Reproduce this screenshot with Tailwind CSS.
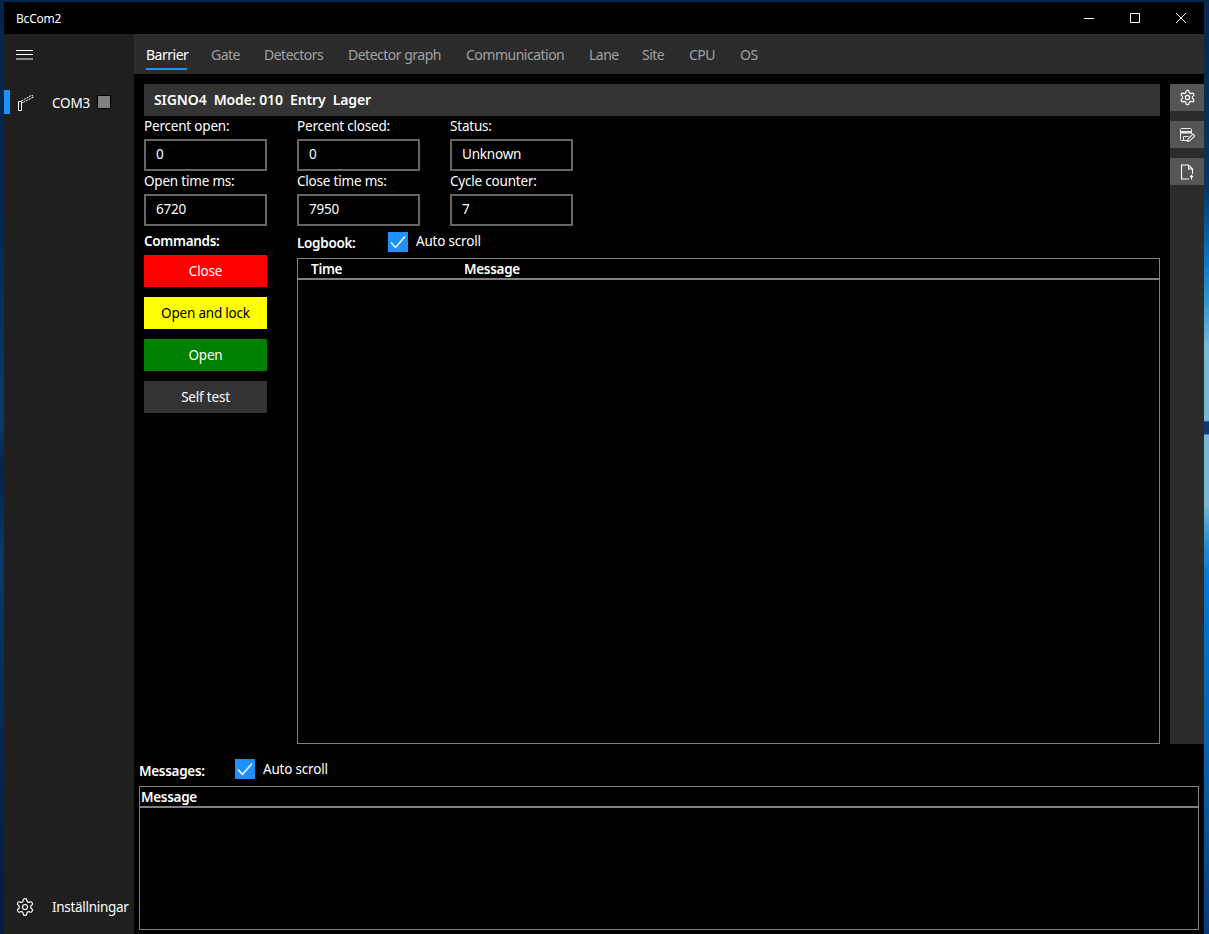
<!DOCTYPE html>
<html lang="en">
<head>
    <meta charset="UTF-8">
    <title>BcCom2</title>
    <script src="https://cdn.jsdelivr.net/npm/@tailwindcss/browser@4"></script>
</head>
<body class="w-[1209px] h-[934px] overflow-hidden bg-[#03264f] font-['Noto_Sans','Open_Sans',sans-serif] text-[13.5px] tracking-[-0.2px] leading-[19px] text-white">
<div class="flex h-[934px]">
    <!-- wallpaper, left edge -->
    <div class="w-[4px] h-full bg-[linear-gradient(180deg,#04254a_0%,#032a55_25%,#0a3a6c_45%,#04244a_50%,#073a6c_60%,#03244c_85%,#021c40_100%)]"></div>

    <!-- app window -->
    <div class="w-[1200px] mt-[2px] flex flex-col bg-black">
        <!-- title bar -->
        <div class="h-[32px] shrink-0 flex items-center justify-between pl-[12px]">
            <span class="text-[12px]">BcCom2</span>
            <div class="flex">
                <div class="w-[46px] h-[32px] flex items-center justify-center">
                    <svg width="10" height="10" viewBox="0 0 10 10" fill="none" stroke="#fff"><path d="M0 5.5h10"/></svg>
                </div>
                <div class="w-[46px] h-[32px] flex items-center justify-center">
                    <svg width="10" height="10" viewBox="0 0 10 10" fill="none" stroke="#fff"><path d="M.5.5h9v9h-9z"/></svg>
                </div>
                <div class="w-[46px] h-[32px] flex items-center justify-center">
                    <svg width="10" height="10" viewBox="0 0 10 10" fill="none" stroke="#fff"><path d="M0 0l10 10M10 0L0 10"/></svg>
                </div>
            </div>
        </div>

        <div class="flex flex-1 min-h-0">
            <!-- nav pane -->
            <nav class="w-[130px] shrink-0 bg-[#1f1f1f] flex flex-col">
                <div class="h-[40px] pl-[12px] flex items-center">
                    <svg width="17" height="11" viewBox="0 0 17 11" stroke="#fff"><path d="M0 1.5h17M0 5.5h17M0 10h17"/></svg>
                </div>
                <div class="mt-[16px] h-[24px] flex items-center">
                    <div class="w-[6px] h-[24px] bg-[#1e90ff]"></div>
                    <svg class="ml-[7px] shrink-0" width="17" height="17" viewBox="0 0 17 17" fill="none" stroke="#fff">
                        <path d="M1.5 7.500h3v9h-3z"/>
                        <path d="M4.500 7L15 1l1.500 2L5 9z" stroke-width="1" stroke-dasharray="2 1"/>
                    </svg>
                    <span class="ml-[18px] w-[41px] shrink-0 pt-[2px]">COM3</span>
                    <div class="ml-[4px] w-[14px] h-[14px] bg-[#808080] border border-black"></div>
                </div>
                <div class="mt-auto mb-[15px] h-[24px] flex items-center pl-[11px]">
                    <svg class="shrink-0" width="20" height="20" viewBox="0 0 24 24" fill="none" stroke="#fff" stroke-width="1.4">
                        <path d="M12.22 2h-.44a2 2 0 0 0-2 2v.18a2 2 0 0 1-1 1.73l-.43.25a2 2 0 0 1-2 0l-.15-.08a2 2 0 0 0-2.73.73l-.22.38a2 2 0 0 0 .73 2.73l.15.1a2 2 0 0 1 1 1.72v.51a2 2 0 0 1-1 1.74l-.15.09a2 2 0 0 0-.73 2.73l.22.38a2 2 0 0 0 2.73.73l.15-.08a2 2 0 0 1 2 0l.43.25a2 2 0 0 1 1 1.73V20a2 2 0 0 0 2 2h.44a2 2 0 0 0 2-2v-.18a2 2 0 0 1 1-1.73l.43-.25a2 2 0 0 1 2 0l.15.08a2 2 0 0 0 2.73-.73l.22-.39a2 2 0 0 0-.73-2.73l-.15-.08a2 2 0 0 1-1-1.74v-.5a2 2 0 0 1 1-1.74l.15-.09a2 2 0 0 0 .73-2.73l-.22-.38a2 2 0 0 0-2.73-.73l-.15.08a2 2 0 0 1-2 0l-.43-.25a2 2 0 0 1-1-1.73V4a2 2 0 0 0-2-2z"/>
                        <circle cx="12" cy="12" r="3"/>
                    </svg>
                    <span class="ml-[17px] whitespace-nowrap tracking-[-0.3px]">Inställningar</span>
                </div>
            </nav>

            <div class="flex-1 flex flex-col min-w-0">
                <!-- tabs -->
                <div class="h-[40px] shrink-0 bg-[#2b2b2b] flex pl-[12px] gap-[24px] text-[#a0a0a0] text-[14px] tracking-[-0.5px]">
                    <div class="w-[41px] h-[36px] pt-[6px] flex items-center whitespace-nowrap text-white border-b-2 border-[#1e90ff]">Barrier</div>
                    <div class="w-[29px] h-[40px] flex items-center whitespace-nowrap">Gate</div>
                    <div class="w-[60px] h-[40px] flex items-center whitespace-nowrap">Detectors</div>
                    <div class="w-[94px] h-[40px] flex items-center whitespace-nowrap">Detector graph</div>
                    <div class="w-[99px] h-[40px] flex items-center whitespace-nowrap">Communication</div>
                    <div class="w-[29px] h-[40px] flex items-center whitespace-nowrap">Lane</div>
                    <div class="w-[23px] h-[40px] flex items-center whitespace-nowrap">Site</div>
                    <div class="w-[27px] h-[40px] flex items-center whitespace-nowrap">CPU</div>
                    <div class="w-[18px] h-[40px] flex items-center whitespace-nowrap">OS</div>
                </div>

                <!-- barrier page -->
                <div class="mt-[10px] h-[660px] shrink-0 flex">
                    <div class="ml-[10px] w-[1016px] flex flex-col">
                        <div class="h-[32px] shrink-0 bg-[#333333] pl-[10px] pb-[2px] flex items-center text-[14px] tracking-[-0.1px] font-semibold whitespace-pre">SIGNO4  Mode: 010  Entry  Lager</div>

                        <div class="flex flex-1 min-h-0">
                            <!-- left column -->
                            <div class="w-[123px] shrink-0">
                                <div class="h-[23px] pt-[1px]">Percent open:</div>
                                <div class="h-[32px] border-2 border-[#666666] pl-[10px] pb-[2px] flex items-center">0</div>
                                <div class="h-[23px] pt-[1px]">Open time ms:</div>
                                <div class="h-[32px] border-2 border-[#666666] pl-[10px] pb-[2px] flex items-center">6720</div>
                                <div class="h-[29px] pt-[6px] font-semibold tracking-[-0.3px]">Commands:</div>
                                <div class="flex flex-col gap-[10px] text-center">
                                    <div class="h-[32px] leading-[32px] bg-[#ff0000]">Close</div>
                                    <div class="h-[32px] leading-[32px] bg-[#ffff00] text-black">Open and lock</div>
                                    <div class="h-[32px] leading-[32px] bg-[#008000]">Open</div>
                                    <div class="h-[32px] leading-[32px] bg-[#333333]">Self test</div>
                                </div>
                            </div>

                            <!-- right of commands -->
                            <div class="ml-[30px] flex-1 flex flex-col min-w-0">
                                <div class="flex gap-[30px]">
                                    <div class="w-[123px]">
                                        <div class="h-[23px] pt-[1px]">Percent closed:</div>
                                        <div class="h-[32px] border-2 border-[#666666] pl-[10px] pb-[2px] flex items-center">0</div>
                                        <div class="h-[23px] pt-[1px]">Close time ms:</div>
                                        <div class="h-[32px] border-2 border-[#666666] pl-[10px] pb-[2px] flex items-center">7950</div>
                                    </div>
                                    <div class="w-[123px]">
                                        <div class="h-[23px] pt-[1px]">Status:</div>
                                        <div class="h-[32px] border-2 border-[#666666] pl-[10px] pb-[2px] flex items-center">Unknown</div>
                                        <div class="h-[23px] pt-[1px]">Cycle counter:</div>
                                        <div class="h-[32px] border-2 border-[#666666] pl-[10px] pb-[2px] flex items-center">7</div>
                                    </div>
                                </div>

                                <div class="h-[32px] shrink-0 flex">
                                    <div class="w-[91px] pt-[8px] font-semibold tracking-[-0.3px]">Logbook:</div>
                                    <div class="mt-[6px] w-[20px] h-[20px] bg-[#1e90ff] flex items-center justify-center">
                                        <svg width="20" height="20" viewBox="0 0 20 20" fill="none" stroke="#fff" stroke-width="1.4"><path d="M3 10.500l4.500 5L17 4.500"/></svg>
                                    </div>
                                    <span class="ml-[8px] pt-[6px]">Auto scroll</span>
                                </div>

                                <div class="flex-1 border border-[#808080] flex flex-col">
                                    <div class="h-[21px] shrink-0 flex pl-[13px] pt-[1px] font-semibold tracking-[-0.3px] border-b-2 border-[#808080]">
                                        <div class="w-[153px]">Time</div>
                                        <div>Message</div>
                                    </div>
                                </div>
                            </div>
                        </div>
                    </div>

                    <!-- side toolbar -->
                    <div class="ml-[10px] w-[34px] bg-[#2b2b2b] flex flex-col gap-[10px]">
                        <div class="h-[27px] bg-[#555555] flex items-center justify-center">
                            <svg width="17" height="17" viewBox="0 0 24 24" fill="none" stroke="#fff" stroke-width="1.7">
                                <path d="M12.22 2h-.44a2 2 0 0 0-2 2v.18a2 2 0 0 1-1 1.73l-.43.25a2 2 0 0 1-2 0l-.15-.08a2 2 0 0 0-2.73.73l-.22.38a2 2 0 0 0 .73 2.73l.15.1a2 2 0 0 1 1 1.72v.51a2 2 0 0 1-1 1.74l-.15.09a2 2 0 0 0-.73 2.73l.22.38a2 2 0 0 0 2.73.73l.15-.08a2 2 0 0 1 2 0l.43.25a2 2 0 0 1 1 1.73V20a2 2 0 0 0 2 2h.44a2 2 0 0 0 2-2v-.18a2 2 0 0 1 1-1.73l.43-.25a2 2 0 0 1 2 0l.15.08a2 2 0 0 0 2.73-.73l.22-.39a2 2 0 0 0-.73-2.73l-.15-.08a2 2 0 0 1-1-1.74v-.5a2 2 0 0 1 1-1.74l.15-.09a2 2 0 0 0 .73-2.73l-.22-.38a2 2 0 0 0-2.73-.73l-.15.08a2 2 0 0 1-2 0l-.43-.25a2 2 0 0 1-1-1.73V4a2 2 0 0 0-2-2z"/>
                                <circle cx="12" cy="12" r="3"/>
                            </svg>
                        </div>
                        <div class="h-[27px] bg-[#555555] flex items-center justify-center">
                            <svg width="15" height="14" viewBox="0 0 15 14" fill="none" stroke="#e8e8e8">
                                <path d="M7 12.500H1.500a1 1 0 0 1-1-1V1.500a1 1 0 0 1 1-1h9a1 1 0 0 1 1 1V6"/>
                                <path d="M1 3.500h10V5H1z" fill="#e8e8e8"/>
                                <path d="M3.500 12.500V8.500h5"/>
                                <path d="M7.500 13.500l.7-2.800 4.800-4.700 1.800 1.800-4.800 4.800z" stroke-width="1.200"/>
                            </svg>
                        </div>
                        <div class="h-[27px] bg-[#555555] flex items-center justify-center">
                            <svg width="14" height="16" viewBox="0 0 14 16" fill="none" stroke="#fff" stroke-width="1.100">
                                <path d="M9 15H1.500V1H8.500L12.500 5v5"/>
                                <path d="M8.500 1V5H12.500"/>
                                <path d="M11.500 15.500V11.500M10 13l1.500-1.500L13 13"/>
                            </svg>
                        </div>
                    </div>
                </div>

                <!-- messages -->
                <div class="ml-[5px] w-[1060px] flex-1 flex flex-col">
                    <div class="h-[42px] shrink-0 flex">
                        <div class="w-[96px] pt-[18px] font-semibold tracking-[-0.3px]">Messages:</div>
                        <div class="mt-[15px] w-[20px] h-[20px] bg-[#1e90ff]">
                            <svg width="20" height="20" viewBox="0 0 20 20" fill="none" stroke="#fff" stroke-width="1.4"><path d="M3 10.500l4.500 5L17 4.500"/></svg>
                        </div>
                        <span class="ml-[8px] pt-[16px]">Auto scroll</span>
                    </div>
                    <div class="h-[144px] border border-[#808080] flex flex-col">
                        <div class="h-[21px] shrink-0 pl-[1px] pt-[1px] font-semibold tracking-[-0.3px] border-b-2 border-[#808080]">Message</div>
                    </div>
                </div>
            </div>
        </div>
    </div>

    <!-- wallpaper, right edge -->
    <div class="w-[5px] h-full bg-[linear-gradient(180deg,#06284f_0%,#07355f_20%,#0a78c8_28%,#3a9ad0_33%,#7ab8d8_37%,#7ab5d5_45%,#0a3a70_45.200%,#0a3a70_46.400%,#7ab5d5_46.600%,#7ab5d5_54%,#2a90d0_58%,#0078d4_62%,#0a5aa0_85%,#0a3a70_100%)]"></div>
</div>
</body>
</html>
